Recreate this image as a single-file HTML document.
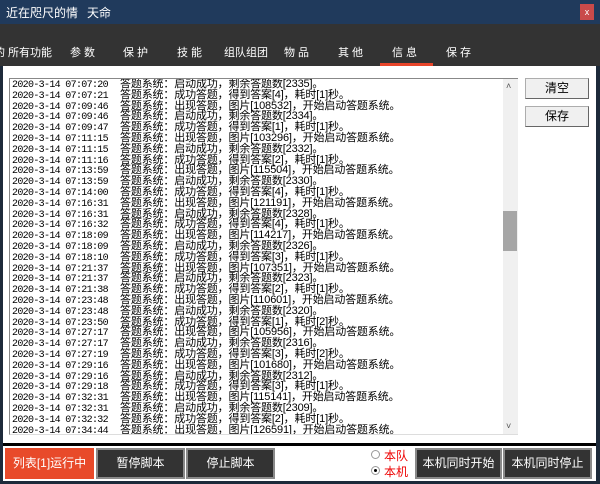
<!DOCTYPE html><html><head><meta charset="utf-8"><style>
*{margin:0;padding:0;box-sizing:border-box}
body{width:600px;height:484px;background:#1d2a3a;position:relative;overflow:hidden;font-family:"Liberation Sans","Noto Sans CJK SC",sans-serif}
.a{position:absolute}
#title{left:0;top:0;width:600px;height:24px;background:#203a5c;color:#fff;font-size:12px}
#tabs{left:0;top:24px;width:600px;height:42px;background:#333}
.tab{position:absolute;top:20px;color:#fff;font-size:11px;letter-spacing:0}
#panel{left:3px;top:66px;width:593px;height:378px;background:#fff}
#log{left:9px;top:78px;width:509px;height:357px;border:1px solid #888;border-right:none;border-bottom:1px solid #ddd;background:#fff;overflow:hidden}
.l{position:absolute;left:2px;height:11px;font-size:11px;line-height:11px;white-space:nowrap;color:#000}
.d{position:absolute;left:0;font-family:"Liberation Mono",monospace;font-size:10px;letter-spacing:-0.67px}
.m{position:absolute;left:108px;top:-1px;font-family:"Liberation Sans","Noto Sans CJK SC",sans-serif;font-size:11px;letter-spacing:-0.15px}
#sb{left:503px;top:79px;width:15px;height:355px;background:#f0f0f0}
.wb{position:absolute;left:525px;width:64px;height:21px;background:#f0f0f0;border:1px solid #adadad;border-right-color:#666;border-bottom-color:#666;font-size:12px;text-align:center;line-height:19px}
#bot{left:3px;top:443px;width:593px;height:3px;background:#000}
#bar{left:3px;top:446px;width:593px;height:35px;background:#fff}
.bb{position:absolute;top:448px;height:31px;background:#333;color:#fff;font-size:12px;text-align:center;line-height:27px;border:2px solid #8a8a8a}
</style></head><body>
<div class="a" id="title"><span class="a" style="left:6px;top:4px">近在咫尺的情</span><span class="a" style="left:87px;top:4px">天命</span>
<div class="a" style="left:580px;top:4px;width:14px;height:16px;background:#c94a4a;color:#fff;font-size:9px;text-align:center;line-height:16px">x</div></div>
<div class="a" id="tabs">
<span class="tab" style="left:-6px">的</span><span class="tab" style="left:8px">所有功能</span><span class="tab" style="left:70px">参 数</span><span class="tab" style="left:123px">保 护</span><span class="tab" style="left:177px">技 能</span><span class="tab" style="left:224px">组队组团</span><span class="tab" style="left:284px">物 品</span><span class="tab" style="left:338px">其 他</span><span class="tab" style="left:392px">信 息</span><span class="tab" style="left:446px">保 存</span>
<div class="a" style="left:380px;top:39px;width:53px;height:3px;background:#e8452a"></div></div>
<div class="a" id="panel"></div>
<div class="a" id="log">
<div class="l" style="top:1px"><span class="d">2020-3-14 07:07:20</span><span class="m">答题系统：启动成功，剩余答题数[2335]。</span></div>
<div class="l" style="top:12px"><span class="d">2020-3-14 07:07:21</span><span class="m">答题系统：成功答题，得到答案[4]，耗时[1]秒。</span></div>
<div class="l" style="top:23px"><span class="d">2020-3-14 07:09:46</span><span class="m">答题系统：出现答题，图片[108532]，开始启动答题系统。</span></div>
<div class="l" style="top:33px"><span class="d">2020-3-14 07:09:46</span><span class="m">答题系统：启动成功，剩余答题数[2334]。</span></div>
<div class="l" style="top:44px"><span class="d">2020-3-14 07:09:47</span><span class="m">答题系统：成功答题，得到答案[1]，耗时[1]秒。</span></div>
<div class="l" style="top:55px"><span class="d">2020-3-14 07:11:15</span><span class="m">答题系统：出现答题，图片[103296]，开始启动答题系统。</span></div>
<div class="l" style="top:66px"><span class="d">2020-3-14 07:11:15</span><span class="m">答题系统：启动成功，剩余答题数[2332]。</span></div>
<div class="l" style="top:77px"><span class="d">2020-3-14 07:11:16</span><span class="m">答题系统：成功答题，得到答案[2]，耗时[1]秒。</span></div>
<div class="l" style="top:87px"><span class="d">2020-3-14 07:13:59</span><span class="m">答题系统：出现答题，图片[115504]，开始启动答题系统。</span></div>
<div class="l" style="top:98px"><span class="d">2020-3-14 07:13:59</span><span class="m">答题系统：启动成功，剩余答题数[2330]。</span></div>
<div class="l" style="top:109px"><span class="d">2020-3-14 07:14:00</span><span class="m">答题系统：成功答题，得到答案[4]，耗时[1]秒。</span></div>
<div class="l" style="top:120px"><span class="d">2020-3-14 07:16:31</span><span class="m">答题系统：出现答题，图片[121191]，开始启动答题系统。</span></div>
<div class="l" style="top:131px"><span class="d">2020-3-14 07:16:31</span><span class="m">答题系统：启动成功，剩余答题数[2328]。</span></div>
<div class="l" style="top:141px"><span class="d">2020-3-14 07:16:32</span><span class="m">答题系统：成功答题，得到答案[4]，耗时[1]秒。</span></div>
<div class="l" style="top:152px"><span class="d">2020-3-14 07:18:09</span><span class="m">答题系统：出现答题，图片[114217]，开始启动答题系统。</span></div>
<div class="l" style="top:163px"><span class="d">2020-3-14 07:18:09</span><span class="m">答题系统：启动成功，剩余答题数[2326]。</span></div>
<div class="l" style="top:174px"><span class="d">2020-3-14 07:18:10</span><span class="m">答题系统：成功答题，得到答案[3]，耗时[1]秒。</span></div>
<div class="l" style="top:185px"><span class="d">2020-3-14 07:21:37</span><span class="m">答题系统：出现答题，图片[107351]，开始启动答题系统。</span></div>
<div class="l" style="top:195px"><span class="d">2020-3-14 07:21:37</span><span class="m">答题系统：启动成功，剩余答题数[2323]。</span></div>
<div class="l" style="top:206px"><span class="d">2020-3-14 07:21:38</span><span class="m">答题系统：成功答题，得到答案[2]，耗时[1]秒。</span></div>
<div class="l" style="top:217px"><span class="d">2020-3-14 07:23:48</span><span class="m">答题系统：出现答题，图片[110601]，开始启动答题系统。</span></div>
<div class="l" style="top:228px"><span class="d">2020-3-14 07:23:48</span><span class="m">答题系统：启动成功，剩余答题数[2320]。</span></div>
<div class="l" style="top:239px"><span class="d">2020-3-14 07:23:50</span><span class="m">答题系统：成功答题，得到答案[1]，耗时[2]秒。</span></div>
<div class="l" style="top:249px"><span class="d">2020-3-14 07:27:17</span><span class="m">答题系统：出现答题，图片[105956]，开始启动答题系统。</span></div>
<div class="l" style="top:260px"><span class="d">2020-3-14 07:27:17</span><span class="m">答题系统：启动成功，剩余答题数[2316]。</span></div>
<div class="l" style="top:271px"><span class="d">2020-3-14 07:27:19</span><span class="m">答题系统：成功答题，得到答案[3]，耗时[2]秒。</span></div>
<div class="l" style="top:282px"><span class="d">2020-3-14 07:29:16</span><span class="m">答题系统：出现答题，图片[101680]，开始启动答题系统。</span></div>
<div class="l" style="top:293px"><span class="d">2020-3-14 07:29:16</span><span class="m">答题系统：启动成功，剩余答题数[2312]。</span></div>
<div class="l" style="top:303px"><span class="d">2020-3-14 07:29:18</span><span class="m">答题系统：成功答题，得到答案[3]，耗时[1]秒。</span></div>
<div class="l" style="top:314px"><span class="d">2020-3-14 07:32:31</span><span class="m">答题系统：出现答题，图片[115141]，开始启动答题系统。</span></div>
<div class="l" style="top:325px"><span class="d">2020-3-14 07:32:31</span><span class="m">答题系统：启动成功，剩余答题数[2309]。</span></div>
<div class="l" style="top:336px"><span class="d">2020-3-14 07:32:32</span><span class="m">答题系统：成功答题，得到答案[2]，耗时[1]秒。</span></div>
<div class="l" style="top:347px"><span class="d">2020-3-14 07:34:44</span><span class="m">答题系统：出现答题，图片[126591]，开始启动答题系统。</span></div>
</div>
<div class="a" id="sb"><div class="a" style="left:3px;top:2px;font-size:9px;color:#555">˄</div><div class="a" style="left:0;top:132px;width:14px;height:40px;background:#a6a6a6"></div><div class="a" style="left:3px;top:342px;font-size:9px;color:#555">˅</div></div>
<div class="wb" style="top:78px">清空</div>
<div class="wb" style="top:106px">保存</div>
<div class="a" id="bot"></div>
<div class="a" id="bar"></div>
<div class="bb" style="left:5px;width:89px;background:#e84a2a;border-color:#e84a2a">列表[1]运行中</div>
<div class="bb" style="left:96px;width:89px">暂停脚本</div>
<div class="bb" style="left:186px;width:89px">停止脚本</div>
<div class="a" style="left:371px;top:450px;width:9px;height:9px;border:1px solid #999;border-radius:50%;background:#fff"></div>
<div class="a" style="left:384px;top:447px;color:#e00;font-size:12px">本队</div>
<div class="a" style="left:371px;top:466px;width:9px;height:9px;border:1px solid #999;border-radius:50%;background:#fff"><div class="a" style="left:2px;top:2px;width:3px;height:3px;background:#000;border-radius:50%"></div></div>
<div class="a" style="left:384px;top:463px;color:#e00;font-size:12px">本机</div>
<div class="bb" style="left:415px;width:87px">本机同时开始</div>
<div class="bb" style="left:503px;width:89px">本机同时停止</div>
</body></html>
